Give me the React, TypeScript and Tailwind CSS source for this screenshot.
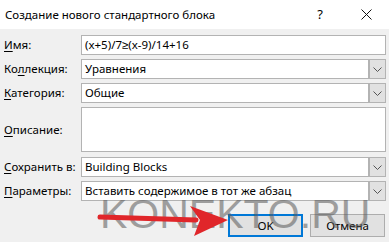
import { ReactNode } from 'react';

const font = { fontFamily: '"Noto Sans", "Liberation Sans", sans-serif' };

function Label({ text, mnemonic }: { text: string; mnemonic: number }) {
  return (
    <span className="w-[81px] shrink-0 pl-[4px] text-[11.5px] text-black">
      {text.slice(0, mnemonic)}
      <span className="underline underline-offset-2">{text[mnemonic]}</span>
      {text.slice(mnemonic + 1)}
    </span>
  );
}

function Chevron() {
  return (
    <svg width="9" height="5" viewBox="0 0 9 5" fill="none">
      <path d="M0.5 0.5 L4.5 4.5 L8.5 0.5" stroke="#555" strokeWidth="1" />
    </svg>
  );
}

function Combo({ value }: { value: string }) {
  return (
    <div className="flex h-[20px] w-[305px] border border-[#b3b3b3] bg-white">
      <span className="flex-1 truncate pl-[3px] text-[11.5px] leading-[18px] text-black">{value}</span>
      <div className="flex w-[17px] items-center justify-center border-l-2 border-[#b3b3b3] bg-[#e1e1e1]">
        <Chevron />
      </div>
    </div>
  );
}

function Row({ children, className = '' }: { children: ReactNode; className?: string }) {
  return <div className={`flex items-center ${className}`}>{children}</div>;
}

export default function App() {
  return (
    <div className="relative h-[242px] w-[389px] overflow-hidden bg-[#f0f0f0]" style={font}>
      <div className="flex h-[29px] items-center bg-white">
        <span className="flex-1 pl-[5px] text-[11.5px] text-black">Создание нового стандартного блока</span>
        <span className="w-[46px] text-center text-[13px] text-black">?</span>
        <div className="flex w-[46px] items-center justify-center">
          <svg width="11" height="11" viewBox="0 0 11 11">
            <path d="M0.5 0.5 L10.5 10.5 M10.5 0.5 L0.5 10.5" stroke="#111" strokeWidth="1" />
          </svg>
        </div>
      </div>

      <div className="flex flex-col pt-[6px]">
        <Row>
          <Label text="Имя:" mnemonic={0} />
          <div className="h-[20px] w-[305px] border border-[#b3b3b3] bg-white pl-[3px] text-[11.5px] leading-[18px] text-black">
            (x+5)/7≥(x-9)/14+16
          </div>
        </Row>
        <Row className="mt-[4px]">
          <Label text="Коллекция:" mnemonic={2} />
          <Combo value="Уравнения" />
        </Row>
        <Row className="mt-[4px]">
          <Label text="Категория:" mnemonic={0} />
          <Combo value="Общие" />
        </Row>
        <Row className="mt-[4px]">
          <Label text="Описание:" mnemonic={0} />
          <div className="h-[45px] w-[305px] border border-[#b3b3b3] bg-white" />
        </Row>
        <Row className="mt-[5px]">
          <Label text="Сохранить в:" mnemonic={0} />
          <Combo value="Building Blocks" />
        </Row>
        <Row className="mt-[4px]">
          <Label text="Параметры:" mnemonic={0} />
          <Combo value="Вставить содержимое в тот же абзац" />
        </Row>
        <div className="mt-[13px] flex justify-end gap-[7px] pr-[4px]">
          <button className="h-[23px] w-[75px] border-2 border-[#0078d7] bg-[#e1e1e1] text-[11.5px] text-black">
            OK
          </button>
          <button className="h-[23px] w-[75px] border border-[#adadad] bg-[#e1e1e1] text-[11.5px] text-black">
            Отмена
          </button>
        </div>
      </div>

      <span
        className="pointer-events-none absolute left-[100px] top-[194px] text-[41px] leading-none text-[#5a5a5a] opacity-55"
        style={{ fontFamily: '"Liberation Sans", sans-serif' }}
      >
        KONEKTO.RU
      </span>
      <svg className="pointer-events-none absolute left-[96px] top-[203px]" width="136" height="36" viewBox="0 0 136 36">
        <path d="M4 14 L100 17" stroke="#e0262a" strokeWidth="5" strokeLinecap="round" />
        <path d="M94 3 L132 17 L98 33 L104 17 Z" fill="#e0262a" />
      </svg>
    </div>
  );
}
